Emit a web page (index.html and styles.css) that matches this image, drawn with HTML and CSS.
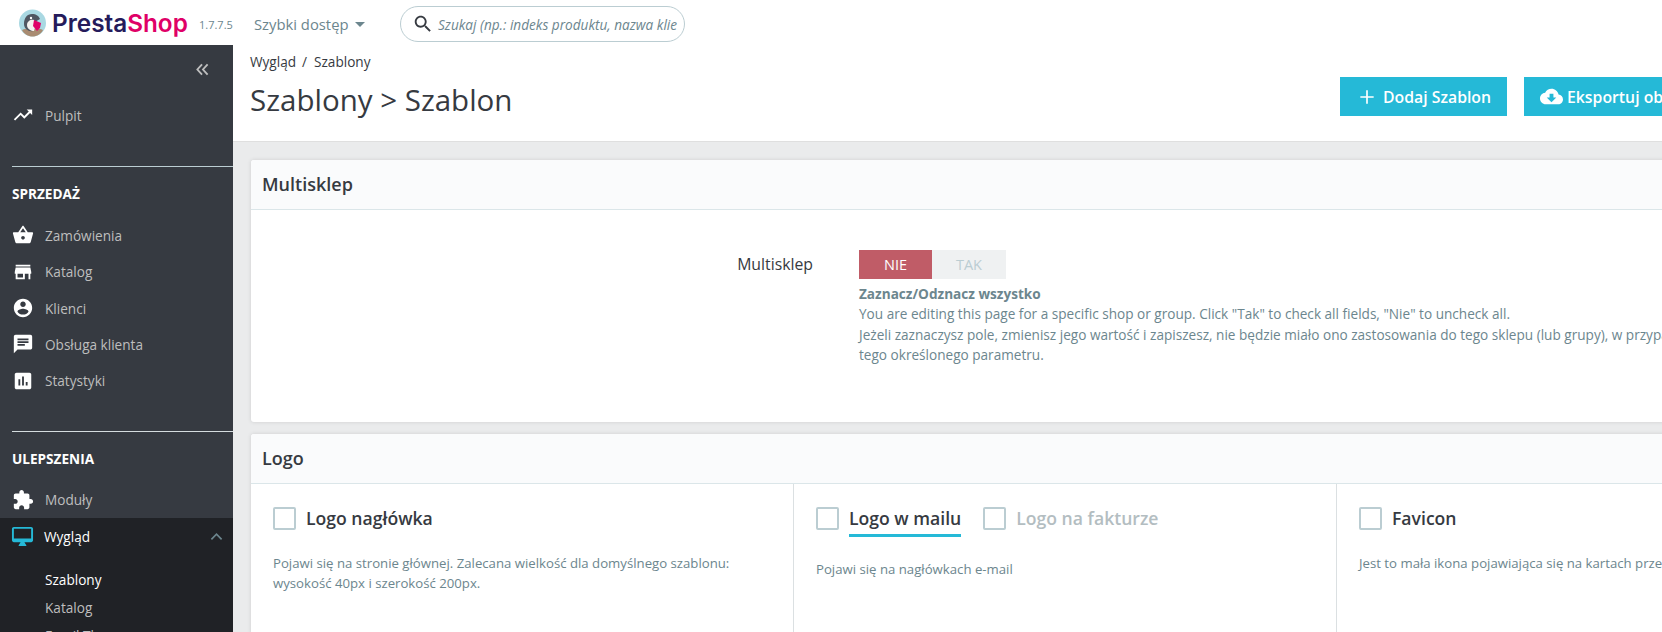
FILE: index.html
```html
<!DOCTYPE html>
<html lang="pl">
<head>
<meta charset="utf-8">
<title>Szablony</title>
<link rel="stylesheet" href="styles.css">
</head>
<body>
<header class="topbar">
  <a class="logo">
    <svg class="logo-mark" viewBox="0 0 27 28">
      <circle cx="13.5" cy="14" r="13.5" fill="#a9d8e2"/>
      <path d="M3 21c3-2 18-2 21 0-2 4-6 6.500-10.500 6.500S5 25 3 21z" fill="#a98c72"/>
      <path d="M5 15c0-6 3-10 8-10 4 0 7 2 8 5l-5 3-2 9c-4 1-9-2-9-7z" fill="#4f5661"/>
      <path d="M8 16c0-4 4-6 7-5l2 3-2 8c-3 0-7-2-7-6z" fill="#f4f1ee"/>
      <path d="M15 11l7 3-1 5-3 3-4-5z" fill="#df0067"/>
      <circle cx="12" cy="9" r="1.200" fill="#fff"/>
    </svg>
    <span class="logo-text"><span class="logo-presta">Presta</span><span class="logo-shop">Shop</span></span>
  </a>
  <span class="version">1.7.7.5</span>
  <span class="quick">Szybki dostęp<i class="caret"></i></span>
  <div class="search">
    <svg class="search-icon" viewBox="0 0 24 24"><path d="M15.500 14h-.79l-.28-.27C15.410 12.590 16 11.110 16 9.500 16 5.910 13.090 3 9.500 3S3 5.910 3 9.500 5.910 16 9.500 16c1.610 0 3.090-.59 4.230-1.570l.27.28v.79l5 4.990L20.490 19l-4.990-5zm-6 0C7.010 14 5 11.990 5 9.500S7.010 5 9.500 5 14 7.010 14 9.500 11.990 14 9.500 14z"/></svg>
    <span class="search-text">Szukaj (np.: indeks produktu, nazwa klie</span>
  </div>
</header>

<div class="layout">
  <nav class="sidebar">
    <div class="collapse"><svg viewBox="0 0 16 14"><path d="M7.500 1.500 2.500 7l5 5.500M13.500 1.500 8.500 7l5 5.500"/></svg></div>
    <a class="item item-first"><svg viewBox="0 0 24 24"><path d="M16 6l2.290 2.290-4.880 4.880-4-4L2 16.590 3.410 18l6-6 4 4 6.300-6.290L22 12V6z"/></svg>Pulpit</a>

    <div class="section-rule"></div>
    <div class="section-title">SPRZEDAŻ</div>
    <a class="item"><svg viewBox="0 0 24 24"><path d="M17.210 9l-4.380-6.560c-.19-.28-.51-.42-.83-.42-.32 0-.64.14-.83.43L6.790 9H2c-.55 0-1 .45-1 1 0 .09.01.18.04.27l2.540 9.270c.23.84 1 1.460 1.920 1.460h13c.92 0 1.690-.62 1.930-1.460l2.540-9.270L23 10c0-.55-.45-1-1-1h-4.790zM9 9l3-4.400L15 9H9zm3 8c-1.100 0-2-.9-2-2s.9-2 2-2 2 .9 2 2-.9 2-2 2z"/></svg>Zamówienia</a>
    <a class="item"><svg viewBox="0 0 24 24"><path d="M20 4H4v2h16V4zm1 10v-2l-1-5H4l-1 5v2h1v6h10v-6h4v6h2v-6h1zm-9 4H6v-4h6v4z"/></svg>Katalog</a>
    <a class="item"><svg viewBox="0 0 24 24"><path d="M12 2C6.480 2 2 6.480 2 12s4.480 10 10 10 10-4.480 10-10S17.520 2 12 2zm0 3c1.660 0 3 1.340 3 3s-1.340 3-3 3-3-1.340-3-3 1.340-3 3-3zm0 14.200c-2.500 0-4.710-1.280-6-3.220.03-1.990 4-3.080 6-3.080 1.990 0 5.970 1.090 6 3.080-1.290 1.940-3.500 3.220-6 3.220z"/></svg>Klienci</a>
    <a class="item"><svg viewBox="0 0 24 24"><path d="M20 2H4c-1.100 0-1.990.9-1.990 2L2 22l4-4h14c1.100 0 2-.9 2-2V4c0-1.100-.9-2-2-2zM6 9h12v2H6V9zm8 5H6v-2h8v2zm4-6H6V6h12v2z"/></svg>Obsługa klienta</a>
    <a class="item"><svg viewBox="0 0 24 24"><path d="M19 3H5c-1.100 0-2 .9-2 2v14c0 1.100.9 2 2 2h14c1.100 0 2-.9 2-2V5c0-1.100-.9-2-2-2zM9 17H7v-7h2v7zm4 0h-2V7h2v10zm4 0h-2v-4h2v4z"/></svg>Statystyki</a>

    <div class="section-rule section-rule-second"></div>
    <div class="section-title section-title-second">ULEPSZENIA</div>
    <a class="item"><svg viewBox="0 0 24 24"><path d="M20.500 11H19V7c0-1.100-.9-2-2-2h-4V3.500C13 2.120 11.880 1 10.500 1S8 2.120 8 3.500V5H4c-1.100 0-1.990.9-1.990 2v3.800H3.500c1.490 0 2.700 1.210 2.700 2.700s-1.210 2.700-2.700 2.700H2V20c0 1.100.9 2 2 2h3.800v-1.500c0-1.490 1.210-2.700 2.700-2.700 1.490 0 2.700 1.210 2.700 2.700V22H17c1.100 0 2-.9 2-2v-4h1.500c1.380 0 2.500-1.120 2.500-2.500S21.880 11 20.500 11z"/></svg>Moduły</a>
    <div class="active-group">
      <a class="item item-active"><svg class="icon-active" viewBox="0 0 24 24"><path d="M21 2H3c-1.100 0-2 .9-2 2v12c0 1.100.9 2 2 2h7l-2 3v1h8v-1l-2-3h7c1.100 0 2-.9 2-2V4c0-1.100-.9-2-2-2zm0 12H3V4h18v10z"/></svg><span class="item-label">Wygląd</span><svg class="chevron" viewBox="0 0 14 9"><path d="M1.500 7.500 7 2l5.500 5.500"/></svg></a>
      <a class="sub sub-current">Szablony</a>
      <a class="sub">Katalog</a>
      <a class="sub">Email Theme</a>
    </div>
  </nav>

  <main class="main">
    <section class="page-head">
      <div class="crumbs"><span>Wygląd</span><span class="crumb-sep">/</span><span>Szablony</span></div>
      <div class="head-row">
        <h1 class="title">Szablony &gt; Szablon</h1>
        <div class="toolbar">
          <a class="btn btn-add"><svg viewBox="0 0 24 24"><path d="M20 13h-7v7h-2v-7H4v-2h7V4h2v7h7z"/></svg>Dodaj Szablon</a>
          <a class="btn btn-export"><svg viewBox="0 0 24 24"><path d="M19.350 10.040C18.670 6.590 15.640 4 12 4 9.110 4 6.600 5.640 5.350 8.040 2.340 8.360 0 10.910 0 14c0 3.310 2.690 6 6 6h13c2.760 0 5-2.240 5-5 0-2.640-2.050-4.780-4.650-4.960zM17 13l-5 5-5-5h3V9h4v4h3z"/></svg>Eksportuj obecny szablon</a>
        </div>
      </div>
    </section>

    <section class="card card-multi">
      <h2 class="card-head">Multisklep</h2>
      <div class="multi-body">
        <div class="multi-label">Multisklep</div>
        <div class="multi-field">
          <div class="toggle"><span class="toggle-off">NIE</span><span class="toggle-on">TAK</span></div>
          <p class="help"><strong>Zaznacz/Odznacz wszystko</strong><br>You are editing this page for a specific shop or group. Click "Tak" to check all fields, "Nie" to uncheck all.<br>Jeżeli zaznaczysz pole, zmienisz jego wartość i zapiszesz, nie będzie miało ono zastosowania do tego sklepu (lub grupy), w przypadku gdy dla<br>tego określonego parametru.</p>
        </div>
      </div>
    </section>

    <section class="card">
      <h2 class="card-head">Logo</h2>
      <div class="logo-cols">
        <div class="logo-col">
          <div class="choice-row">
            <label class="choice"><i class="box"></i><span>Logo nagłówka</span></label>
          </div>
          <p class="col-desc">Pojawi się na stronie głównej. Zalecana wielkość dla domyślnego szablonu: wysokość 40px i szerokość 200px.</p>
        </div>
        <div class="logo-col">
          <div class="choice-row">
            <label class="choice"><i class="box"></i><span class="tab-active">Logo w mailu</span></label>
            <label class="choice choice-muted"><i class="box"></i><span>Logo na fakturze</span></label>
          </div>
          <p class="col-desc col-desc-tabbed">Pojawi się na nagłówkach e-mail</p>
        </div>
        <div class="logo-col">
          <div class="choice-row">
            <label class="choice"><i class="box"></i><span>Favicon</span></label>
          </div>
          <p class="col-desc">Jest to mała ikona pojawiająca się na kartach przeglądarki</p>
        </div>
      </div>
    </section>
  </main>
</div>
</body>
</html>
```
FILE: styles.css
```css
* { box-sizing: border-box; }
html, body { margin: 0; height: 632px; overflow: hidden; }
body { font-family: "Open Sans", sans-serif; background: #eaebec; color: #363a41; font-size: 13.600px; }

.topbar { height: 45px; background: #fff; display: flex; align-items: center; white-space: nowrap; position: relative; z-index: 2; }
.logo { display: flex; align-items: center; margin-left: 19px; width: 180px; }
.logo-mark { width: 27px; height: 28px; margin-right: 6px; flex: none; }
.logo-text { font-family: Inter, sans-serif; font-weight: 600; font-size: 24.300px; line-height: 28px; }
.logo-presta { color: #251b5b; }
.logo-shop { color: #df0067; }
.version { font-size: 11px; color: #6c868e; width: 55px; margin-top: 3px; }
.quick { font-size: 14.800px; color: #6c868e; width: 146px; display: flex; align-items: center; margin-top: 2px; }
.caret { margin-left: 6px; margin-top: 2px; border: 5px solid transparent; border-top-color: #6c868e; border-bottom: 0; }
.search { width: 285px; height: 36px; margin-top: 3px; border: 1px solid #bbcdd2; border-radius: 18px; display: flex; align-items: center; padding-left: 11px; overflow: hidden; }
.search-icon { width: 22px; height: 22px; fill: #363a41; flex: none; }
.search-text { margin-left: 4px; font-size: 13.600px; font-style: italic; color: #6c868e; }

.layout { display: flex; height: 587px; }
.sidebar { width: 233px; flex: none; background: #363a41; overflow: hidden; }
.collapse { height: 48px; padding: 18px 0 0 195px; }
.collapse svg { display: block; width: 15px; height: 13px; fill: none; stroke: #bebebe; stroke-width: 2; }
.item { display: flex; align-items: center; height: 36.300px; padding-left: 12px; color: #bebebe; font-size: 13.600px; }
.item svg { width: 22px; height: 22px; fill: #fff; margin-right: 11px; flex: none; }
.item-first { margin-top: 4px; }
.section-rule { height: 1px; background: #bbcdd2; margin: 33px 0 0 12px; }
.section-rule-second { margin-top: 32px; background: #d5dcdf; }
.section-title { color: #fff; font-size: 13.600px; font-weight: 700; margin: 18px 0 14px 12px; height: 18px; line-height: 18px; }
.section-title-second { margin-top: 18px; margin-bottom: 14px; }
.active-group { background: #202226; padding-bottom: 10px; }
.item-active { height: 37px; color: #fff; padding-left: 11px; }
.item svg.icon-active { fill: #25b9d7; margin-right: 10px; width: 23px; height: 23px; }
.item-label { flex: 1; }
.item svg.chevron { width: 13px; height: 9px; margin-right: 10px; fill: none; stroke: #6c868e; stroke-width: 1.800; }
.sub { display: block; padding-left: 45px; color: #bebebe; height: 28px; line-height: 28px; font-size: 13.600px; }
.sub-current { color: #fff; margin-top: 11px; }

.main { flex: none; width: 1542px; }
.page-head { height: 97px; background: #fff; border-bottom: 1px solid #dfdfdf; padding: 7px 0 0 17px; }
.crumbs { font-size: 13.600px; line-height: 20px; display: flex; }
.crumb-sep { margin: 0 7px 0 6px; }
.head-row { display: flex; justify-content: space-between; }
.title { margin: 9px 0 0; font-size: 29.500px; font-weight: 400; line-height: 38px; }
.toolbar { display: flex; gap: 17px; margin-top: 5px; margin-right: 11px; }
.btn { height: 39px; background: #25b9d7; color: #fff; font-size: 15.800px; font-weight: 600; display: flex; align-items: center; white-space: nowrap; }
.btn svg { fill: #fff; flex: none; }
.btn-add { width: 167px; padding-left: 17px; }
.btn-add svg { width: 20px; height: 20px; margin-right: 6px; }
.btn-export { width: 240px; padding-left: 16px; }
.btn-export svg { width: 23px; height: 23px; margin-right: 4px; }

.card { margin: 0 0 12px 18px; background: #fff; border-radius: 3px; box-shadow: 0 0 4px rgba(0,0,0,.12); width: 1460px; overflow: hidden; }
.card-multi { margin-top: 18px; height: 262px; }
.card-head { margin: 0; height: 50px; background: #fafbfc; border-bottom: 1px solid #dbe6e9; padding: 0 11px; font-size: 18px; font-weight: 600; line-height: 49px; }
.multi-body { display: flex; padding-top: 40px; }
.multi-label { width: 562px; flex: none; text-align: right; font-size: 15.800px; line-height: 29px; }
.multi-field { margin-left: 46px; }
.toggle { display: flex; width: 147px; height: 29px; font-size: 14.500px; line-height: 29px; text-align: center; }
.toggle-off { width: 73px; background: #c05c67; color: #fff; }
.toggle-on { flex: 1; background: #eff1f2; color: #bbcdd2; }
.help { margin: 5px 0 0; font-size: 13.600px; line-height: 20.300px; color: #6c868e; white-space: nowrap; }

.logo-cols { display: grid; grid-template-columns: 543px 543px 374px; height: 150px; }
.logo-col { padding: 23px 0 0 22px; border-right: 1px solid #dbe0e2; }
.choice-row { display: flex; gap: 22px; height: 31px; }
.choice { display: flex; gap: 10px; font-size: 17.600px; font-weight: 600; line-height: 23px; height: 23px; white-space: nowrap; }
.choice-muted { color: #b3bdc1; }
.box { width: 23px; height: 23px; border: 2px solid #bbcdd2; border-radius: 2px; flex: none; }
.tab-active { display: block; height: 30px; border-bottom: 3px solid #25b9d7; }
.col-desc { margin: 15px 0 0; font-size: 13.200px; line-height: 20px; color: #6c868e; width: 470px; }
.col-desc-tabbed { margin-top: 21px; }
```
